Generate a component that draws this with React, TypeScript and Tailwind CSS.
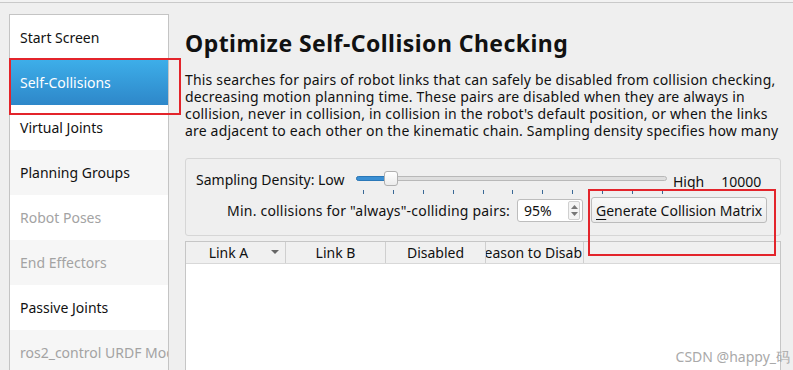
import React from 'react';

const items = [
  { label: 'Start Screen', muted: false },
  { label: 'Self-Collisions', muted: false, active: true },
  { label: 'Virtual Joints', muted: false },
  { label: 'Planning Groups', muted: false },
  { label: 'Robot Poses', muted: true },
  { label: 'End Effectors', muted: true },
  { label: 'Passive Joints', muted: false },
  { label: 'ros2_control URDF Modifications', muted: true },
];

const Sidebar = () => (
  <div className="ml-[9px] mt-[11px] h-[400px] w-[160px] shrink-0 overflow-hidden border border-[#c4c4c4] bg-white">
    {items.map((item, i) => (
      <div
        key={item.label}
        className={
          'flex h-[45px] items-center overflow-hidden whitespace-nowrap pl-[10px] text-[14px] ' +
          (item.active
            ? 'bg-gradient-to-b from-[#3daee9] to-[#2e87c9] text-white'
            : i % 2 === 1
              ? 'bg-[#f6f6f6]'
              : 'bg-white') +
          (item.active ? '' : item.muted ? ' text-[#a3a3a3]' : ' text-[#111]')
        }
      >
        {item.label}
      </div>
    ))}
  </div>
);

const Slider = () => (
  <div className="relative h-[24px] w-[311px]">
    <div className="absolute left-0 right-0 top-[5px] h-[5px] rounded-full border border-[#b8b8b8] bg-[#dedede]" />
    <div className="absolute left-0 top-[5px] h-[5px] w-[32px] rounded-l-full border border-[#2a78b8] bg-[#3a8fd3]" />
    <div className="absolute left-[28px] top-0 h-[15px] w-[14px] rounded-[3px] border border-[#b0b0b0] bg-gradient-to-b from-white to-[#ececec]" />
    <div className="absolute left-[7px] right-[4px] top-[19px] flex justify-between">
      {Array.from({ length: 11 }).map((_, i) => (
        <div key={i} className="h-[4px] w-px bg-[#3a6996]" />
      ))}
    </div>
  </div>
);

const SpinBox = () => (
  <div className="flex h-[23px] w-[66px] items-center justify-between rounded-[3px] border border-[#bdbdbd] bg-white pl-[6px] pr-[2px]">
    <span>95%</span>
    <div className="flex h-[19px] w-[12px] flex-col items-center justify-center gap-[3px] rounded-[2px] border border-[#d0d0d0] bg-[#f4f4f4]">
      <svg width="7" height="4" viewBox="0 0 7 4">
        <path d="M0 4 L3.5 0 L7 4 Z" fill="#777" />
      </svg>
      <svg width="7" height="4" viewBox="0 0 7 4">
        <path d="M0 0 L3.5 4 L7 0 Z" fill="#777" />
      </svg>
    </div>
  </div>
);

const App = () => {
  return (
    <div
      className="relative h-[370px] w-[793px] overflow-hidden bg-[#efefef] text-[14px] text-[#111]"
      style={{ fontFamily: '"Noto Sans", "Open Sans", sans-serif' }}
    >
      <div className="h-[2px] bg-[#f2f2f2]" />
      <div className="h-px bg-[#c9c9c9]" />
      <div className="flex">
        <Sidebar />
        <main className="ml-[16px] flex w-[596px] flex-col">
          <h1 className="mt-[25px] whitespace-nowrap text-[23px] font-bold leading-[30px] tracking-[0.45px] text-[#111]">
            Optimize Self-Collision Checking
          </h1>
          <p className="mt-[13px] whitespace-nowrap text-[14px] leading-[17px] tracking-[0.18px] text-[#111]">
            This searches for pairs of robot links that can safely be disabled from collision checking,
            <br />
            decreasing motion planning time. These pairs are disabled when they are always in
            <br />
            collision, never in collision, in collision in the robot's default position, or when the links
            <br />
            are adjacent to each other on the kinematic chain. Sampling density specifies how many
          </p>
          <div className="mt-[19px] flex h-[78px] flex-col rounded-[3px] border border-[#d6d6d6] pl-[10px]">
            <div className="mt-[10px] flex h-[24px] items-start">
              <span className="mt-[2px] w-[160px] whitespace-nowrap leading-[18px]">Sampling Density: Low</span>
              <div className="mt-[2px]">
                <Slider />
              </div>
              <span className="ml-[6px] mt-[4px] leading-[18px]">High</span>
              <span className="ml-[17px] mt-[4px] leading-[18px]">10000</span>
            </div>
            <div className="mt-[4px] flex items-center">
              <span className="w-[321px] whitespace-nowrap pr-[7px] text-right tracking-[0.2px]">
                Min. collisions for "always"-colliding pairs:
              </span>
              <SpinBox />
              <button className="ml-[8px] h-[26px] whitespace-nowrap rounded-[3px] border border-[#bcbcbc] bg-gradient-to-b from-[#f8f8f8] to-[#ececec] px-[4px] text-[14px]">
                <span className="underline underline-offset-[3px]">G</span>enerate Collision Matrix
              </button>
            </div>
          </div>
          <div className="mt-[5px] h-[140px] border border-[#c6c6c6] bg-white">
            <div className="flex h-[22px] border-b border-[#d8d8d8] bg-[#f0f0f0] text-[14px]">
              <div className="relative flex w-[100px] items-center justify-center border-r border-[#cfcfcf] pr-[14px]">
                Link A
                <svg className="absolute right-[6px] top-[8px]" width="8" height="4" viewBox="0 0 8 4">
                  <path d="M0 0 L4 4 L8 0 Z" fill="#666" />
                </svg>
              </div>
              <div className="flex w-[100px] items-center justify-center border-r border-[#cfcfcf]">Link B</div>
              <div className="flex w-[100px] items-center justify-center border-r border-[#cfcfcf]">Disabled</div>
              <div className="flex w-[98px] items-center justify-end overflow-hidden whitespace-nowrap border-r border-[#cfcfcf] pr-[1px]">
                Reason to Disab
              </div>
            </div>
          </div>
        </main>
      </div>
      <div className="absolute left-[9px] top-[58px] h-[57px] w-[172px] border-2 border-[#e3242b]" />
      <div className="absolute left-[588px] top-[189px] h-[67px] w-[188px] border-2 border-[#e3242b]" />
      <div className="absolute bottom-[3px] right-[3px] text-[14px] text-[#a9a9a9]">
        CSDN @happy_码
      </div>
    </div>
  );
};

export default App;
